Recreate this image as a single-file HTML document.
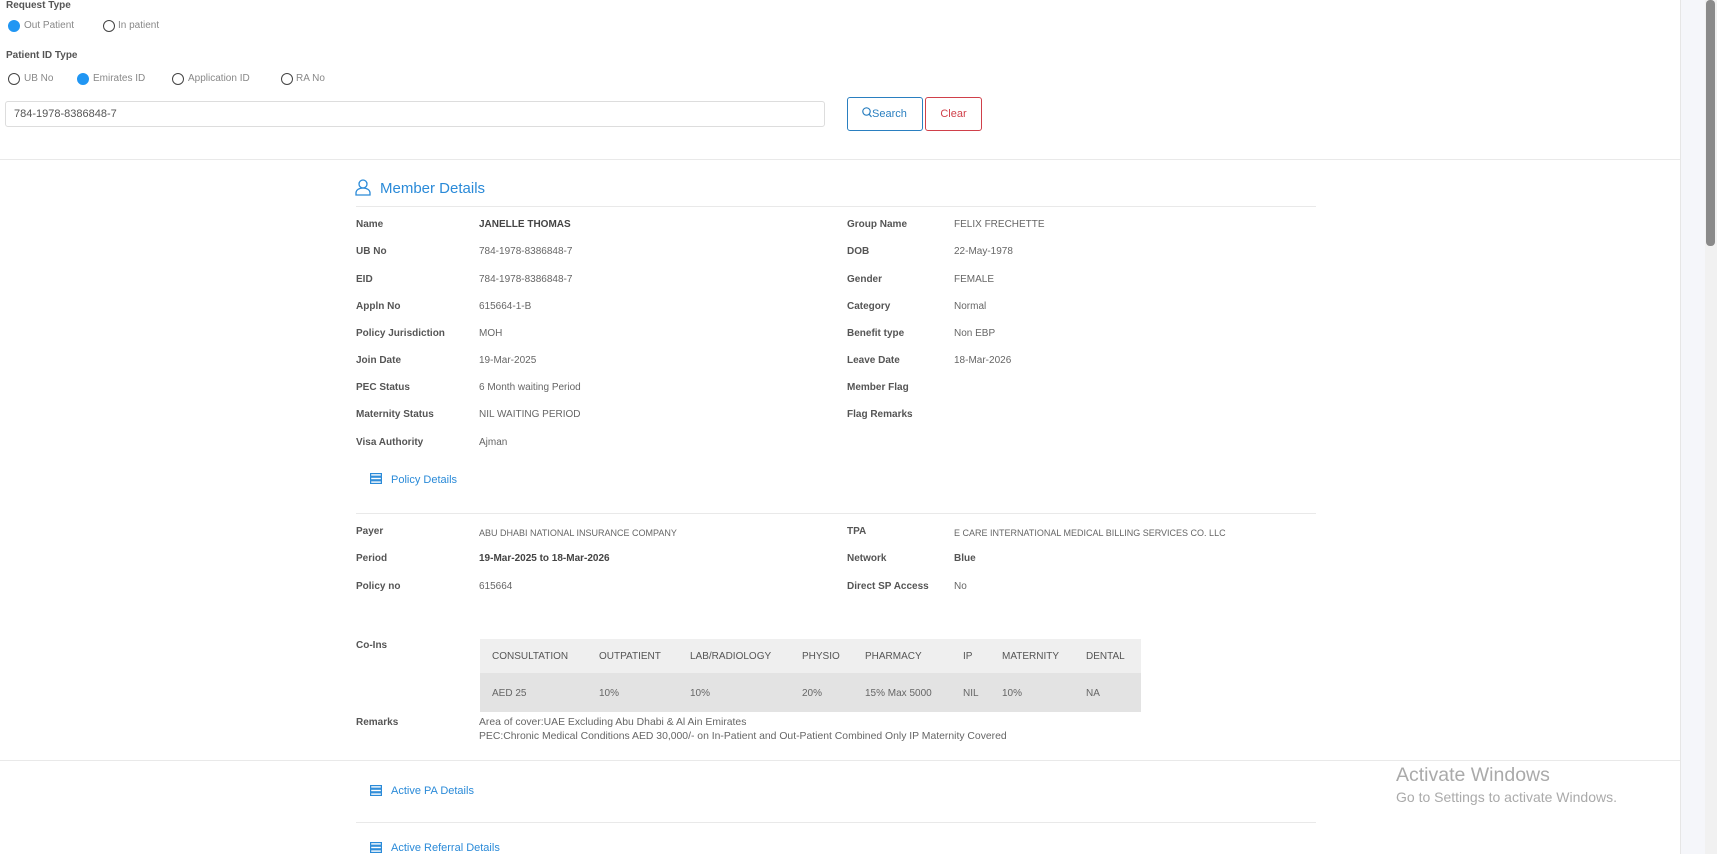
<!DOCTYPE html>
<html><head><style>
*{margin:0;padding:0;box-sizing:border-box}
body{width:1717px;height:854px;overflow:hidden;background:#fff;font-family:"Liberation Sans",sans-serif;position:relative;color:#666}
.a{position:absolute;white-space:nowrap;font-size:10px;line-height:12px}
.h{font-weight:bold;color:#555}
.lb{font-weight:bold;color:#555}
.v{color:#666}
.rd{position:absolute;width:12px;height:12px;border-radius:50%;border:1.3px solid #444}
.rd.on{background:#2196f3;border-color:#2196f3}
.line{position:absolute;height:1px;background:#e9e9e9}
.bl{color:#2a8ad8}
.ic{position:absolute;width:12px;height:11px}
</style></head><body>
<div style="position:absolute;left:1680px;top:0;width:25px;height:854px;background:#f5f6fa;border-left:1px solid #e6e6e6"></div>
<div style="position:absolute;left:1705px;top:0;width:12px;height:854px;background:#f1f1f1"></div>
<div style="position:absolute;left:1706px;top:0;width:9px;height:246px;background:#8a8a8a;border-radius:4px"></div>

<div class="a h" style="left:6px;top:0px">Request Type</div>
<div class="rd on" style="left:8px;top:20px"></div><div class="a" style="left:24px;top:20px;color:#888">Out Patient</div>
<div class="rd" style="left:103px;top:20px"></div><div class="a" style="left:118px;top:20px;color:#888">In patient</div>
<div class="a h" style="left:6px;top:50px">Patient ID Type</div>
<div class="rd" style="left:8px;top:73px"></div><div class="a" style="left:24px;top:73px;color:#888">UB No</div>
<div class="rd on" style="left:77px;top:73px"></div><div class="a" style="left:93px;top:73px;color:#888">Emirates ID</div>
<div class="rd" style="left:172px;top:73px"></div><div class="a" style="left:188px;top:73px;color:#888">Application ID</div>
<div class="rd" style="left:281px;top:73px"></div><div class="a" style="left:296px;top:73px;color:#888">RA No</div>
<div style="position:absolute;left:5px;top:101px;width:820px;height:26px;border:1px solid #ddd;border-radius:3px"></div>
<div class="a" style="left:14px;top:108px;font-size:11px;color:#555">784-1978-8386848-7</div>
<div style="position:absolute;left:847px;top:97px;width:76px;height:34px;border:1px solid #2a7fc0;border-radius:3px;color:#2a7fc0;font-size:11px;line-height:32px;padding-left:14px"><svg width="10" height="11" viewBox="0 0 10 11" fill="none" stroke="#2a7fc0" stroke-width="1.2" style="vertical-align:-1px"><circle cx="4.5" cy="4.5" r="3.7"/><path d="M7.2 7.3L9.5 10"/></svg>Search</div>
<div style="position:absolute;left:925px;top:97px;width:57px;height:34px;border:1px solid #d0404a;border-radius:3px;color:#d0404a;font-size:11px;text-align:center;line-height:32px">Clear</div>
<div class="line" style="left:0;top:159px;width:1680px"></div>

<svg style="position:absolute;left:355px;top:179px" width="16" height="17" viewBox="0 0 16 17" fill="none" stroke="#2a8ad8" stroke-width="1.3"><circle cx="8" cy="5" r="4"/><path d="M1 16v-2c0-3 3-5 7-5s7 2 7 5v2z"/></svg>
<div class="a bl" style="left:380px;top:181px;font-size:15px;line-height:16px">Member Details</div>
<div class="line" style="left:356px;top:206px;width:960px"></div>

<div class="a lb" style="left:356px;top:219px">Name</div><div class="a" style="left:479px;top:219px;font-weight:bold;color:#444">JANELLE THOMAS</div>
<div class="a lb" style="left:847px;top:219px">Group Name</div><div class="a v" style="left:954px;top:219px">FELIX FRECHETTE</div>
<div class="a lb" style="left:356px;top:246px">UB No</div><div class="a v" style="left:479px;top:246px">784-1978-8386848-7</div>
<div class="a lb" style="left:847px;top:246px">DOB</div><div class="a v" style="left:954px;top:246px">22-May-1978</div>
<div class="a lb" style="left:356px;top:274px">EID</div><div class="a v" style="left:479px;top:274px">784-1978-8386848-7</div>
<div class="a lb" style="left:847px;top:274px">Gender</div><div class="a v" style="left:954px;top:274px">FEMALE</div>
<div class="a lb" style="left:356px;top:301px">Appln No</div><div class="a v" style="left:479px;top:301px">615664-1-B</div>
<div class="a lb" style="left:847px;top:301px">Category</div><div class="a v" style="left:954px;top:301px">Normal</div>
<div class="a lb" style="left:356px;top:328px">Policy Jurisdiction</div><div class="a v" style="left:479px;top:328px">MOH</div>
<div class="a lb" style="left:847px;top:328px">Benefit type</div><div class="a v" style="left:954px;top:328px">Non EBP</div>
<div class="a lb" style="left:356px;top:355px">Join Date</div><div class="a v" style="left:479px;top:355px">19-Mar-2025</div>
<div class="a lb" style="left:847px;top:355px">Leave Date</div><div class="a v" style="left:954px;top:355px">18-Mar-2026</div>
<div class="a lb" style="left:356px;top:382px">PEC Status</div><div class="a v" style="left:479px;top:382px">6 Month waiting Period</div>
<div class="a lb" style="left:847px;top:382px">Member Flag</div>
<div class="a lb" style="left:356px;top:409px">Maternity Status</div><div class="a v" style="left:479px;top:409px">NIL WAITING PERIOD</div>
<div class="a lb" style="left:847px;top:409px">Flag Remarks</div>
<div class="a lb" style="left:356px;top:437px">Visa Authority</div><div class="a v" style="left:479px;top:437px">Ajman</div>

<svg class="ic" style="left:370px;top:473px" viewBox="0 0 12 11" fill="none" stroke="#2a8ad8" stroke-width="1.2"><rect x="0.6" y="0.6" width="10.8" height="2.6"/><rect x="0.6" y="4.2" width="10.8" height="2.6"/><rect x="0.6" y="7.8" width="10.8" height="2.6"/></svg>
<div class="a bl" style="left:391px;top:474px;font-size:11px">Policy Details</div>
<div class="line" style="left:356px;top:513px;width:960px"></div>

<div class="a lb" style="left:356px;top:526px">Payer</div><div class="a v" style="left:479px;top:527px;font-size:9px">ABU DHABI NATIONAL INSURANCE COMPANY</div>
<div class="a lb" style="left:847px;top:526px">TPA</div><div class="a v" style="left:954px;top:527px;font-size:9px">E CARE INTERNATIONAL MEDICAL BILLING SERVICES CO. LLC</div>
<div class="a lb" style="left:356px;top:553px">Period</div><div class="a" style="left:479px;top:553px;font-weight:bold;color:#444">19-Mar-2025 to 18-Mar-2026</div>
<div class="a lb" style="left:847px;top:553px">Network</div><div class="a" style="left:954px;top:553px;font-weight:bold;color:#555">Blue</div>
<div class="a lb" style="left:356px;top:581px">Policy no</div><div class="a v" style="left:479px;top:581px">615664</div>
<div class="a lb" style="left:847px;top:581px">Direct SP Access</div><div class="a v" style="left:954px;top:581px">No</div>

<div class="a lb" style="left:356px;top:640px">Co-Ins</div>
<div style="position:absolute;left:480px;top:639px;width:661px;height:34px;background:#efefef"></div>
<div style="position:absolute;left:480px;top:673px;width:661px;height:39px;background:#e3e3e3"></div>
<div class="a" style="left:492px;top:651px;color:#555">CONSULTATION</div><div class="a" style="left:599px;top:651px;color:#555">OUTPATIENT</div><div class="a" style="left:690px;top:651px;color:#555">LAB/RADIOLOGY</div><div class="a" style="left:802px;top:651px;color:#555">PHYSIO</div><div class="a" style="left:865px;top:651px;color:#555">PHARMACY</div><div class="a" style="left:963px;top:651px;color:#555">IP</div><div class="a" style="left:1002px;top:651px;color:#555">MATERNITY</div><div class="a" style="left:1086px;top:651px;color:#555">DENTAL</div>
<div class="a v" style="left:492px;top:688px">AED 25</div><div class="a v" style="left:599px;top:688px">10%</div><div class="a v" style="left:690px;top:688px">10%</div><div class="a v" style="left:802px;top:688px">20%</div><div class="a v" style="left:865px;top:688px">15% Max 5000</div><div class="a v" style="left:963px;top:688px">NIL</div><div class="a v" style="left:1002px;top:688px">10%</div><div class="a v" style="left:1086px;top:688px">NA</div>

<div class="a lb" style="left:356px;top:717px">Remarks</div>
<div class="a v" style="left:479px;top:717px;font-size:10.4px">Area of cover:UAE Excluding Abu Dhabi &amp; Al Ain Emirates</div>
<div class="a v" style="left:479px;top:731px;font-size:10.4px">PEC:Chronic Medical Conditions AED 30,000/- on In-Patient and Out-Patient Combined Only IP Maternity Covered</div>
<div class="line" style="left:0;top:760px;width:1680px"></div>

<svg class="ic" style="left:370px;top:785px" viewBox="0 0 12 11" fill="none" stroke="#2a8ad8" stroke-width="1.2"><rect x="0.6" y="0.6" width="10.8" height="2.6"/><rect x="0.6" y="4.2" width="10.8" height="2.6"/><rect x="0.6" y="7.8" width="10.8" height="2.6"/></svg>
<div class="a bl" style="left:391px;top:785px;font-size:11px">Active PA Details</div>
<div class="line" style="left:356px;top:822px;width:960px"></div>
<svg class="ic" style="left:370px;top:842px" viewBox="0 0 12 11" fill="none" stroke="#2a8ad8" stroke-width="1.2"><rect x="0.6" y="0.6" width="10.8" height="2.6"/><rect x="0.6" y="4.2" width="10.8" height="2.6"/><rect x="0.6" y="7.8" width="10.8" height="2.6"/></svg>
<div class="a bl" style="left:391px;top:842px;font-size:11px">Active Referral Details</div>

<div class="a" style="left:1396px;top:764px;font-size:19.5px;line-height:22px;color:#aaa">Activate Windows</div>
<div class="a" style="left:1396px;top:790px;font-size:14px;line-height:15px;color:#aaa">Go to Settings to activate Windows.</div>
</body></html>
